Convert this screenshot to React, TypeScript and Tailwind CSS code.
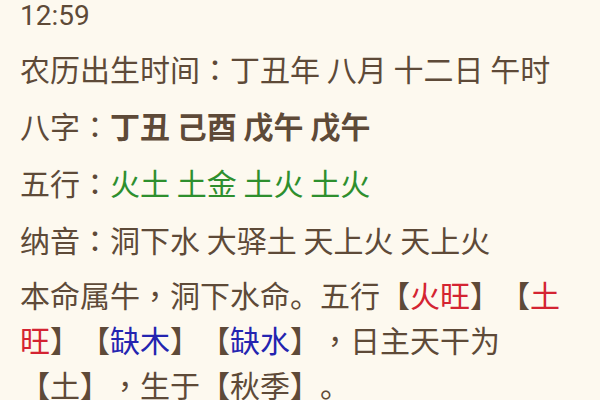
import React from "react";

const cjk = { fontFamily: '"Noto Sans CJK SC", "Noto Sans", sans-serif' };
const tc = { fontFamily: '"Noto Sans CJK TC", "Noto Sans CJK SC", sans-serif' };

function P({ c }: { c: string }) {
  return <span style={tc}>{c}</span>;
}

export default function App() {
  return (
    <div className="w-[600px] h-[400px] overflow-hidden bg-[#fdf9ef] text-[#5e4a38] pl-[20px]">
      <div className="text-[28px] leading-[30px] pt-[1px]" style={{ fontFamily: "Roboto, sans-serif" }}>
        12:59
      </div>
      <div
        style={cjk}
        className="text-[30px] leading-[45px] mt-[15px] flex flex-col gap-[12px] [text-spacing-trim:space-all]"
      >
        <div className="whitespace-nowrap">
          农历出生时间<P c="：" />丁丑年 八月 十二日 午时
        </div>
        <div className="whitespace-nowrap">
          八字<P c="：" />
          <span className="font-bold">丁丑 己酉 戊午 戊午</span>
        </div>
        <div className="whitespace-nowrap">
          五行<P c="：" />
          <span className="text-[#2e8f2e]">火土 土金 土火 土火</span>
        </div>
        <div className="whitespace-nowrap">
          纳音<P c="：" />洞下水 大驿土 天上火 天上火
        </div>
        <div className="whitespace-nowrap -mt-[2px] leading-[45px]">
          本命属牛<P c="，" />洞下水命。五行【<span className="text-[#d42432]">火旺</span>】【
          <span className="text-[#d42432]">土</span>
          <br />
          <span className="text-[#d42432]">旺</span>】【<span className="text-[#2424b0]">缺木</span>】【
          <span className="text-[#2424b0]">缺水</span>】<P c="，" />日主天干为
          <br />
          【土】<P c="，" />生于【秋季】。
        </div>
      </div>
    </div>
  );
}
